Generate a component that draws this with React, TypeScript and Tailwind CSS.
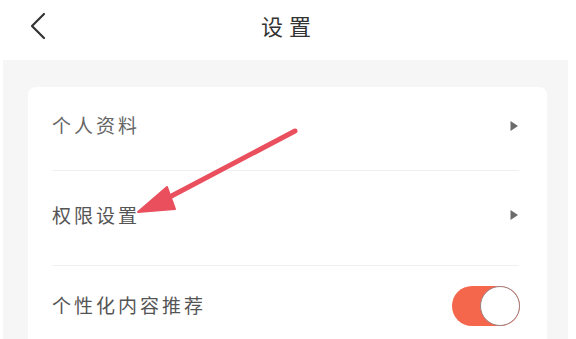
import React from "react";

const font = { fontFamily: '"Noto Sans CJK SC", "Noto Sans", sans-serif' };

function Chevron() {
  return (
    <svg width="10" height="12" viewBox="0 0 10 12">
      <path d="M1.5 1 L9 6 L1.5 11 Z" fill="#6b6b6b" />
    </svg>
  );
}

export default function App() {
  return (
    <div className="relative w-[576px] h-[339px] overflow-hidden bg-white" style={font}>
      <div className="h-[60px] flex items-center relative">
        <svg className="absolute left-[28px] top-[12px]" width="20" height="28" viewBox="0 0 20 28">
          <path d="M16 2 L4 14 L16 26" fill="none" stroke="#333" strokeWidth="2.2" strokeLinecap="round" strokeLinejoin="round" />
        </svg>
        <div className="flex-1 text-center text-[22px] text-[#333] tracking-[6px] pl-[2px] pb-[10px]">设置</div>
      </div>
      <div className="ml-[3px] mr-[8px] h-[279px] bg-[#f6f6f6] pt-[27px] pl-[25px] pr-[21px]">
        <div className="bg-white h-full rounded-t-[8px] pl-[24px] pr-[28px]">
          <div className="h-[84px] flex items-center justify-between border-b border-[#f0f0f0] pb-[6px]">
            <span className="text-[19px] text-[#666] tracking-[3px]">个人资料</span>
            <Chevron />
          </div>
          <div className="h-[95px] flex items-center justify-between border-b border-[#f0f0f0] pb-[6px]">
            <span className="text-[19px] text-[#555] tracking-[3px]">权限设置</span>
            <Chevron />
          </div>
          <div className="h-[76px] flex items-center justify-between pt-[2px]">
            <span className="text-[19px] text-[#555] tracking-[3px]">个性化内容推荐</span>
            <div className="w-[68px] h-[40px] rounded-full bg-[#f4674c] relative mr-[-1px] mt-[2px]">
              <div className="absolute right-0 top-0 w-[40px] h-[40px] rounded-full bg-white border-[1.5px] border-[#a08080]" />
            </div>
          </div>
        </div>
      </div>
      <svg className="absolute left-0 top-0 pointer-events-none" width="576" height="339" viewBox="0 0 576 339">
        <path d="M295 131 L162 201" stroke="#ea4f5e" strokeWidth="5" strokeLinecap="round" />
        <path d="M138 212 L167 187 L175 209 Z" fill="#ea4f5e" stroke="#ea4f5e" strokeWidth="2" strokeLinejoin="round" />
      </svg>
    </div>
  );
}
